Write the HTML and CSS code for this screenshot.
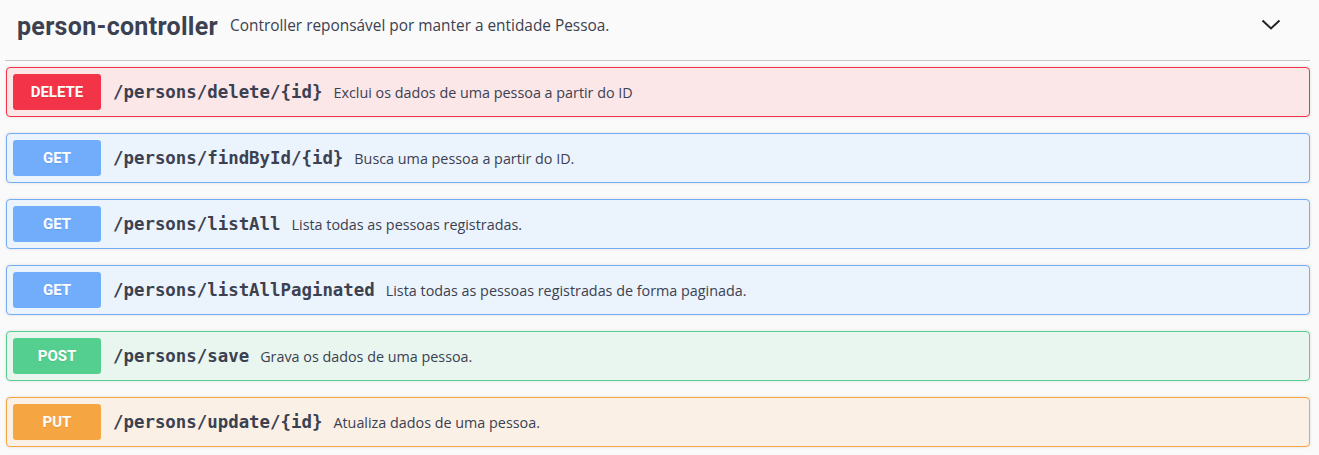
FILE: index.html
```html
<!DOCTYPE html>
<html lang="pt">
<head>
<meta charset="utf-8">
<title>person-controller</title>
<link rel="stylesheet" href="styles.css">
</head>
<body>
<section class="tag-section">
  <h4 class="tag">
    <span class="tag-name">person-controller</span>
    <small class="tag-desc">Controller reponsável por manter a entidade Pessoa.</small>
    <span class="tag-spacer"></span>
    <svg class="chevron" width="20" height="20" viewBox="0 0 20 20"><path d="M1.5 5.5 L10 13.5 L18.5 5.5" fill="none" stroke="#222" stroke-width="2"/></svg>
  </h4>
  <div class="ops">
    <div class="op op-delete">
      <span class="method">DELETE</span>
      <span class="path">/persons/delete/{id}</span>
      <span class="desc">Exclui os dados de uma pessoa a partir do ID</span>
    </div>
    <div class="op op-get">
      <span class="method">GET</span>
      <span class="path">/persons/findById/{id}</span>
      <span class="desc">Busca uma pessoa a partir do ID.</span>
    </div>
    <div class="op op-get">
      <span class="method">GET</span>
      <span class="path">/persons/listAll</span>
      <span class="desc">Lista todas as pessoas registradas.</span>
    </div>
    <div class="op op-get">
      <span class="method">GET</span>
      <span class="path">/persons/listAllPaginated</span>
      <span class="desc">Lista todas as pessoas registradas de forma paginada.</span>
    </div>
    <div class="op op-post">
      <span class="method">POST</span>
      <span class="path">/persons/save</span>
      <span class="desc">Grava os dados de uma pessoa.</span>
    </div>
    <div class="op op-put">
      <span class="method">PUT</span>
      <span class="path">/persons/update/{id}</span>
      <span class="desc">Atualiza dados de uma pessoa.</span>
    </div>
  </div>
</section>
</body>
</html>
```

FILE: styles.css
```css
html, body {
  margin: 0;
  padding: 0;
  background: #fafafa;
  color: #3b4151;
  font-family: "Open Sans", sans-serif;
}
.tag-section {
  padding: 0 9px 0 5px;
}
.tag {
  display: flex;
  align-items: center;
  margin: 0;
  height: 61px;
  box-sizing: border-box;
  padding: 0 29px 7px 12px;
  border-bottom: 1px solid #c6c7cc;
}
.tag-name {
  font-family: Roboto, sans-serif;
  font-weight: 700;
  font-size: 25px;
  letter-spacing: 0.3px;
  color: #3b4151;
}
.tag-desc {
  font-family: "Open Sans", sans-serif;
  font-weight: 400;
  font-size: 15.4px;
  margin-left: 12px;
  color: #3b4151;
  position: relative;
  top: -1px;
}
.tag-spacer { flex: 1; }
.chevron {
  position: relative;
  top: -2px;
}
.ops {
  padding: 6px 0 0 1px;
}
.op {
  display: flex;
  align-items: center;
  height: 50px;
  box-sizing: border-box;
  padding: 0 6px;
  margin-bottom: 16px;
  border: 1px solid;
  border-radius: 4px;
  box-shadow: 0 0 3px rgba(0,0,0,.12);
}
.method {
  flex: none;
  width: 88px;
  height: 36px;
  line-height: 36px;
  text-align: center;
  border-radius: 3px;
  color: #fff;
  font-family: Roboto, sans-serif;
  font-weight: 700;
  font-size: 15px;
  text-shadow: 0 1px 0 rgba(0,0,0,.1);
}
.path {
  margin-left: 12px;
  font-family: "DejaVu Sans Mono", monospace;
  font-weight: 700;
  font-size: 17.4px;
  color: #3b4151;
}
.desc {
  margin-left: 11px;
  font-size: 14.35px;
  color: #3b4151;
}
.op-delete { background: #fbe6e8; border-color: #f33347; }
.op-delete .method { background: #f33347; }
.op-get { background: #ebf3fc; border-color: #75acf7; }
.op-get .method { background: #72adfc; }
.op-post { background: #e8f6ef; border-color: #58cf91; }
.op-post .method { background: #55cf8f; }
.op-put { background: #faf0e5; border-color: #f7a543; }
.op-put .method { background: #f6a543; }
```
